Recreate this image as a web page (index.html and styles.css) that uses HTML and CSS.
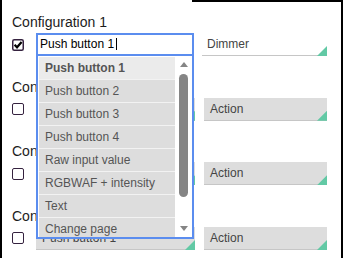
FILE: index.html
```html
<!DOCTYPE html>
<html lang="en">
  <head>
    <meta charset="UTF-8" />
    <title>Configurations</title>
    <link rel="stylesheet" href="styles.css">
  </head>
  <body>
    <div class="panel">
      <!-- 第一组：正在编辑，下拉列表展开 -->
      <div class="config">
        <div class="config-title">Configuration 1</div>
        <div class="config-row">
          <span class="check">
            <svg width="12" height="12" viewBox="0 0 12 12">
              <rect x="0.75" y="0.75" width="10.5" height="10.5" rx="1.5" fill="none" stroke="#35223f" stroke-width="1.5"/>
              <path d="M2.6 5.8 L5 8.3 L9.6 3" fill="none" stroke="#000" stroke-width="2.2"/>
            </svg>
          </span>
          <div class="combo">
            <div class="combo-input">Push button 1<span class="caret"></span></div>
            <div class="combo-list">
              <ul class="options">
                <li class="active">Push button 1</li>
                <li>Push button 2</li>
                <li>Push button 3</li>
                <li>Push button 4</li>
                <li>Raw input value</li>
                <li>RGBWAF + intensity</li>
                <li>Text</li>
                <li>Change page</li>
              </ul>
              <div class="scrollbar">
                <span class="arrow-up"></span>
                <span class="thumb"></span>
                <span class="arrow-down"></span>
              </div>
            </div>
          </div>
          <div class="field select plain">Dimmer</div>
        </div>
      </div>

      <div class="config">
        <div class="config-title">Configuration 2</div>
        <div class="config-row">
          <span class="check"></span>
          <div class="combo"><div class="field">Push button 1</div></div>
          <div class="field select">Action</div>
        </div>
      </div>

      <div class="config">
        <div class="config-title">Configuration 3</div>
        <div class="config-row">
          <span class="check"></span>
          <div class="combo"><div class="field">Push button 1</div></div>
          <div class="field select">Action</div>
        </div>
      </div>

      <div class="config">
        <div class="config-title">Configuration 4</div>
        <div class="config-row">
          <span class="check"></span>
          <div class="combo"><div class="field">Push button 1</div></div>
          <div class="field select">Action</div>
        </div>
      </div>
    </div>
  </body>
</html>
```

FILE: styles.css
```css
body {
  margin: 0;
  background: #fff;
  font-family: "Liberation Sans", Arial, sans-serif;
}

/* 外框 */
.panel {
  position: relative;
  height: 258px;
  box-sizing: border-box;
  border-left: 2px solid #000;
  border-right: 2px solid #000;
  padding: 14px 0 0 10px;
  overflow: hidden;
}

.panel::before {
  content: "";
  position: absolute;
  top: 0;
  left: 190px;
  right: 0;
  height: 2px;
  background: #000;
}

.config {
  margin-bottom: 22.67px;
}

.config-title {
  font-size: 14px;
  line-height: 16px;
  color: #1c1c1c;
  margin-bottom: 3px;
}

.config-row {
  display: flex;
  align-items: center;
}

/* 复选框 */
.check {
  width: 12px;
  height: 12px;
  margin-right: 12px;
  box-sizing: border-box;
  border: 1.5px solid #35223f;
  border-radius: 2px;
}

.check:has(svg) {
  border: none;
}

.check svg {
  display: block;
}

.combo {
  position: relative;
  width: 159px;
  margin-right: 9px;
}

/* 输入框 / 选择框 */
.field {
  position: relative;
  height: 23px;
  box-sizing: border-box;
  background: #ddd;
  border-bottom: 1px solid #c6c6c6;
  padding-left: 6px;
  font-size: 12px;
  line-height: 22px;
  color: #444;
  white-space: nowrap;
}

.field::after {
  content: "";
  position: absolute;
  right: 0;
  bottom: -1px;
  width: 10px;
  height: 10px;
  background: #62c9a5;
  clip-path: polygon(100% 0, 100% 100%, 0 100%);
}

.select {
  width: 123px;
}

.select.plain {
  width: 125px;
  margin-left: -2px;
  padding-left: 5px;
  background: #fff;
  line-height: 23px;
}

.combo-input {
  width: 158px;
  height: 23px;
  box-sizing: border-box;
  border: 2px solid #5b8def;
  padding-left: 2px;
  font-size: 12px;
  line-height: 19px;
  color: #000;
  background: #fff;
}

.caret {
  display: inline-block;
  width: 1px;
  height: 12px;
  margin-left: 2px;
  background: #000;
  vertical-align: -2px;
}

/* 下拉列表 */
.combo-list {
  position: absolute;
  top: 100%;
  left: 0;
  z-index: 2;
  display: flex;
  width: 158px;
  height: 183px;
  box-sizing: border-box;
  border: 2px solid #5b8def;
  border-top: none;
  padding: 1px;
  background: #fff;
  overflow: hidden;
}

.options {
  list-style: none;
  margin: 0;
  padding: 0;
  width: 136px;
  flex: none;
}

.options li {
  height: 22px;
  line-height: 22px;
  padding-left: 6px;
  border-bottom: 1px solid #f2f2f2;
  background: #ddd;
  font-size: 12px;
  color: #555;
  white-space: nowrap;
}

.options li.active {
  background: #ebebeb;
  font-weight: bold;
}

.scrollbar {
  flex: 1;
  margin-left: 1px;
  display: flex;
  flex-direction: column;
  align-items: center;
  padding: 5px 0;
}

.arrow-up,
.arrow-down {
  width: 0;
  height: 0;
  border-left: 4.5px solid transparent;
  border-right: 4.5px solid transparent;
}

.arrow-up {
  border-bottom: 5px solid #858585;
}

.arrow-down {
  margin-top: auto;
  border-top: 5px solid #858585;
}

.thumb {
  width: 9px;
  height: 123px;
  margin-top: 7px;
  border-radius: 4.5px;
  background: #858585;
}
```
